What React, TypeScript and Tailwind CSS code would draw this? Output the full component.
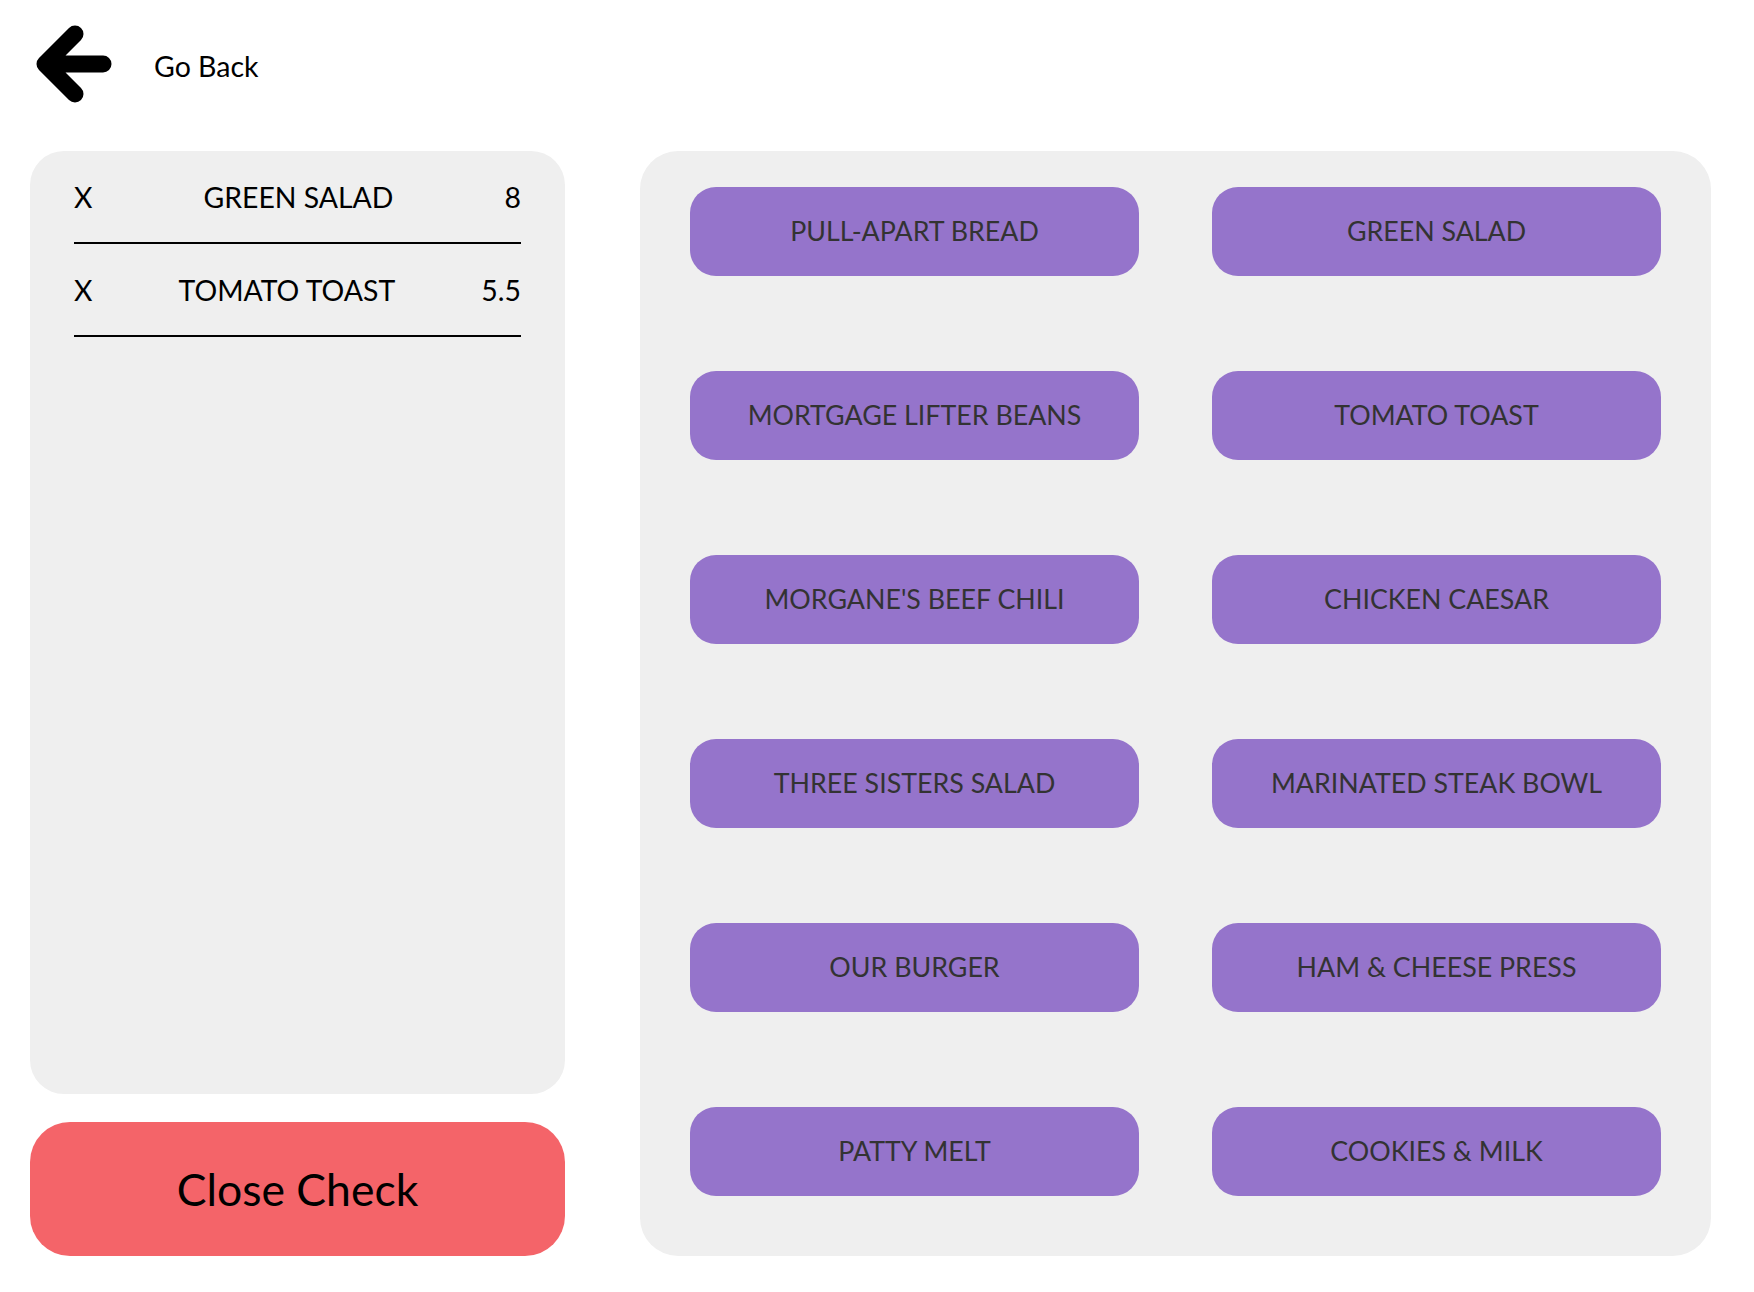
import React from 'react';

const menu = [
  'PULL-APART BREAD',
  'GREEN SALAD',
  'MORTGAGE LIFTER BEANS',
  'TOMATO TOAST',
  "MORGANE'S BEEF CHILI",
  'CHICKEN CAESAR',
  'THREE SISTERS SALAD',
  'MARINATED STEAK BOWL',
  'OUR BURGER',
  'HAM & CHEESE PRESS',
  'PATTY MELT',
  'COOKIES & MILK',
];

const check = [
  { name: 'GREEN SALAD', price: '8' },
  { name: 'TOMATO TOAST', price: '5.5' },
];

function BackArrow() {
  return (
    <svg width="80" height="80" viewBox="0 0 80 80" className="shrink-0">
      <path
        d="M69 40 H12 M41 10 L11 40 L41 70"
        fill="none"
        stroke="#000"
        strokeWidth="17"
        strokeLinecap="round"
        strokeLinejoin="round"
      />
    </svg>
  );
}

export default function App() {
  return (
    <div className="min-h-screen w-[1754px] bg-white text-black font-['Lato','Open_Sans',sans-serif]">
      {/* Header */}
      <div className="flex h-[151px] items-start pl-[34px] pt-[24px]">
        <BackArrow />
        <span className="ml-[40px] mt-[25px] text-[28.5px] leading-[34px]">Go Back</span>
      </div>

      <div className="flex gap-[75px] pl-[30px]">
        {/* Check column */}
        <div className="flex w-[535px] flex-col gap-[28px]">
          <div className="h-[943px] rounded-[34px] bg-[#efefef] px-[44px]">
            {check.map((item) => (
              <div
                key={item.name}
                className="flex items-center justify-between border-b-2 border-black pt-[29px] pb-[28px] text-[28.4px] leading-[34px]"
              >
                <span>X</span>
                <span>{item.name}</span>
                <span>{item.price}</span>
              </div>
            ))}
          </div>
          <button className="flex h-[134px] items-center justify-center rounded-[40px] bg-[#f46469] text-[44.5px]">
            Close Check
          </button>
        </div>

        {/* Menu panel */}
        <div className="h-[1105px] w-[1071px] rounded-[38px] bg-[#efefef] px-[50px] pt-[36px]">
          <div className="grid grid-cols-2 gap-x-[73px] gap-y-[95px]">
            {menu.map((name) => (
              <button
                key={name}
                className="flex h-[89px] items-center justify-center rounded-[26px] bg-[#9574cb] text-[26.8px] text-[#333333]"
              >
                {name}
              </button>
            ))}
          </div>
        </div>
      </div>
    </div>
  );
}
